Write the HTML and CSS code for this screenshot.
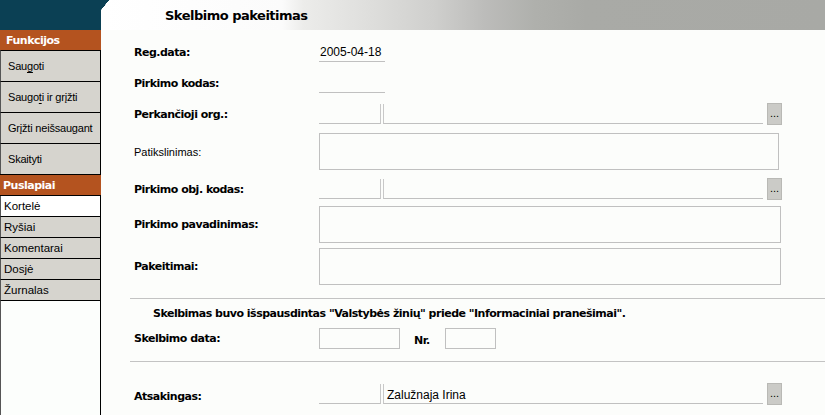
FILE: index.html
```html
<!DOCTYPE html>
<html lang="lt">
<head>
<meta charset="utf-8">
<title>Skelbimo pakeitimas</title>
<link rel="stylesheet" href="styles.css">
</head>
<body>
<div class="page">
  <aside class="side">
    <div class="side-top"></div>
    <div class="side-head">Funkcijos</div>
    <div class="side-btn">Sau<u>g</u>oti</div>
    <div class="side-btn">Saugo<u>t</u>i ir grįžti</div>
    <div class="side-btn">Grįžti neišsaugant</div>
    <div class="side-btn">Skaityti</div>
    <div class="side-head side-head2">Puslapiai</div>
    <div class="side-tab active">Kortelė</div>
    <div class="side-tab">Ryšiai</div>
    <div class="side-tab">Komentarai</div>
    <div class="side-tab">Dosjė</div>
    <div class="side-tab">Žurnalas</div>
    <div class="side-fill"></div>
  </aside>
  <main class="main">
    <div class="titlebar"><h1 class="title">Skelbimo pakeitimas</h1></div>
    <div class="form">
      <div class="row r1">
        <span class="lbl">Reg.data:</span>
        <span class="line">2005-04-18</span>
      </div>
      <div class="row r2">
        <span class="lbl">Pirkimo kodas:</span>
        <span class="line"></span>
      </div>
      <div class="row r3">
        <span class="lbl">Perkančioji org.:</span>
        <span class="f1"></span><span class="f2"></span><span class="dots">...</span>
      </div>
      <div class="row r4">
        <span class="lbl lbl-n">Patikslinimas:</span>
        <span class="area area-s"></span>
      </div>
      <div class="row r5">
        <span class="lbl">Pirkimo obj. kodas:</span>
        <span class="f1"></span><span class="f2"></span><span class="dots">...</span>
      </div>
      <div class="row r6">
        <span class="lbl">Pirkimo pavadinimas:</span>
        <span class="area"></span>
      </div>
      <div class="row r7">
        <span class="lbl">Pakeitimai:</span>
        <span class="area"></span>
      </div>
      <hr class="sep sep1">
      <p class="notice">Skelbimas buvo išspausdintas "Valstybės žinių" priede "Informaciniai pranešimai".</p>
      <div class="row r8">
        <span class="lbl">Skelbimo data:</span>
        <span class="box box-date"></span>
        <span class="nr">Nr.</span>
        <span class="box box-nr"></span>
      </div>
      <hr class="sep sep2">
      <div class="row r9">
        <span class="lbl lbl-low">Atsakingas:</span>
        <span class="f1"></span><span class="f2 f2-low">Zalužnaja Irina</span><span class="dots">...</span>
      </div>
    </div>
  </main>
</div>
</body>
</html>
```
FILE: styles.css
```css
html, body {
  margin: 0;
  padding: 0;
  height: 100%;
  background: #fcfdfb;
}
body {
  font-family: "Liberation Sans", Arial, sans-serif;
  font-size: 11px;
  color: #000;
  overflow: hidden;
}
.page {
  display: flex;
  height: 415px;
}

/* sidebar */
.side {
  width: 101px;
  flex: none;
  display: flex;
  flex-direction: column;
}
.side-top {
  height: 30px;
  background: #0b4054;
}
.side-head {
  height: 20px;
  background: #b4531f;
  color: #fff;
  font-family: "DejaVu Sans", Verdana, sans-serif;
  font-weight: bold;
  font-size: 11px;
  letter-spacing: -0.5px;
  line-height: 21px;
  padding-left: 6px;
}
.side-head2 {
  border-top: 1px solid #000;
  border-bottom: 1px solid #000;
  padding-left: 3px;
}
.side-btn {
  height: 30px;
  line-height: 30px;
  padding-left: 7px;
  background: #d6d4ce;
  border-top: 1px solid #000;
  border-left: 1px solid #555;
  border-right: 1px solid #000;
  font-size: 11px;
  letter-spacing: -0.2px;
  white-space: nowrap;
}
.side-btn u { text-decoration-thickness: 1px; text-underline-offset: 2px; }
.side-tab {
  height: 20px;
  line-height: 20px;
  padding-left: 3px;
  background: #d6d4ce;
  border-bottom: 1px solid #000;
  border-left: 1px solid #555;
  border-right: 1px solid #000;
  font-size: 11.5px;
}
.side-tab.active {
  background: #fff;
}
.side-fill {
  flex: 1;
  background: #fcfefc;
  border-left: 1px solid #555;
  border-right: 1px solid #000;
}

/* main */
.main {
  flex: 1;
  min-width: 0;
}
.titlebar {
  height: 30px;
  background:
    linear-gradient(to bottom right, #0b4054 50%, transparent 51%) 0 0 / 8px 10px no-repeat,
    linear-gradient(to right, #fff 0, #fbfbfb 25%, #ececea 28%, #e0e0de 36%, #cfcfcd 46%, #bcbcba 53%, #afb0ac 60%, #a9aaa6 67%, #a8a9a5 100%);
  display: flex;
  align-items: center;
}
.title {
  margin: 0 0 0 64px;
  font-family: "DejaVu Sans", Verdana, sans-serif;
  font-weight: bold;
  font-size: 13px;
  letter-spacing: -0.5px;
}

.form {
  padding: 10px 0 0 33px;
}
.row {
  display: flex;
  align-items: center;
  height: 24px;
}
.lbl {
  width: 185px;
  flex: none;
  font-family: "DejaVu Sans", Verdana, sans-serif;
  font-weight: bold;
  font-size: 11px;
  letter-spacing: -0.5px;
}
.lbl-n {
  font-family: "Liberation Sans", Arial, sans-serif;
  font-weight: normal;
  letter-spacing: 0;
}
.lbl-low { padding-top: 5px; }
.r2, .r3, .r4, .r5 { margin-top: 7px; }
.r6 { margin-top: 5px; }
.r7 { margin-top: 5px; }
.r4, .r6, .r7 { height: 37px; }

.line {
  width: 66px;
  height: 20px;
  line-height: 20px;
  border-bottom: 1px solid #c0c0c0;
  font-size: 12px;
  padding-left: 1px;
  box-sizing: border-box;
}
.f1 {
  width: 62px;
  height: 20px;
  border-right: 1px solid #c8c8c8;
  border-bottom: 1px solid #c0c0c0;
  box-sizing: border-box;
}
.f2 {
  width: 380px;
  height: 20px;
  margin-left: 2px;
  border-left: 1px solid #c8c8c8;
  border-bottom: 1px solid #c0c0c0;
  box-sizing: border-box;
  font-size: 12px;
  line-height: 20px;
  padding-left: 3px;
}
.f2-low { line-height: 22px; }
.dots {
  width: 15px;
  height: 22px;
  margin-left: 4px;
  box-sizing: border-box;
  background: #cbcbc7;
  border: 1px solid #b9b9b5;
  font-size: 11px;
  display: flex;
  align-items: flex-end;
  justify-content: center;
  line-height: 11px;
  padding-bottom: 5px;
}
.area {
  width: 462px;
  height: 37px;
  border: 1px solid #c0c0c0;
  box-sizing: border-box;
}
.area-s { width: 460px; }

.sep {
  border: 0;
  border-top: 1px solid #c3c3c3;
  margin: 13px 0 0 -4px;
  height: 0;
}
.notice {
  margin: 8px 0 0 19px;
  font-family: "DejaVu Sans", Verdana, sans-serif;
  font-weight: bold;
  font-size: 11px;
  letter-spacing: -0.5px;
  height: 14px;
  line-height: 14px;
}
.r8 { margin-top: 5px; }
.box {
  height: 21px;
  border: 1px solid #c0c0c0;
  box-sizing: border-box;
}
.box-date { width: 81px; }
.nr {
  width: 31px;
  margin-left: 14px;
  padding-top: 4px;
  font-family: "DejaVu Sans", Verdana, sans-serif;
  font-weight: bold;
  font-size: 11px;
  letter-spacing: -0.5px;
}
.box-nr { width: 51px; }
.sep2 { margin-top: 11px; }
.r9 { margin-top: 20px; }
```
